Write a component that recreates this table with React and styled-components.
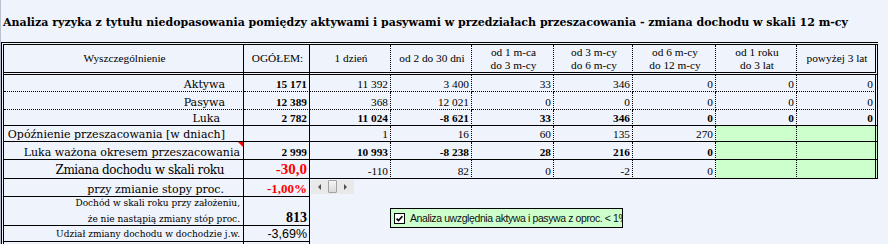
import React from 'react';
import styled, { createGlobalStyle } from 'styled-components';

const GlobalStyle = createGlobalStyle`
  html, body { margin: 0; padding: 0; background: #EFF3FB; }
  #root { min-height: 244px; }
`;

const Page = styled.div`
  min-height: 244px;
  border-left: 1px solid #B9C1D0;
  overflow: hidden;
  background: #EFF3FB;
`;

const Title = styled.h1`
  margin: 0;
  box-sizing: border-box;
  height: 42px;
  padding: 16px 0 0 2px;
  font: bold 11px/14px "DejaVu Serif", serif;
  color: #000;
  white-space: nowrap;
`;

const Sheet = styled.div`
  display: grid;
  grid-template-columns: 240px 66px 81px 81px 82px 79px 83px 81px 81px;
  grid-template-rows: 30px 17px 18px 16px 16px 18px 19px 18px 29px 16px 20px;
  width: max-content;
  border-top: 3px double #000;
  border-left: 3px double #000;
`;

const Cell = styled.div`
  box-sizing: border-box;
  position: relative;
  display: flex;
  align-items: ${p => p.$valign || 'flex-end'};
  justify-content: ${p => p.$justify || 'flex-end'};
  min-width: 0;
  padding: 0 ${p => (p.$pr ?? 2)}px 0 2px;
  border-right: ${p => p.$right || 'none'};
  border-bottom: ${p => p.$bottom || 'none'};
  background: ${p => (p.$green ? '#CCFFCC' : 'transparent')};
  overflow: hidden;
  white-space: nowrap;
`;

const HeadText = styled.span`
  font: 11.3px/13px "Liberation Serif", "Times New Roman", serif;
  color: #000;
  text-align: center;
`;

const Label = styled.span`
  font-family: "DejaVu Serif", serif;
  font-size: ${p => p.$size || 11}px;
  line-height: ${p => p.$lh || 13}px;
  letter-spacing: ${p => p.$ls || 0}px;
  color: #000;
`;

const SmallLines = styled.div`
  display: flex;
  flex-direction: column;
  align-items: flex-end;
  gap: 5px;
  font: 9px/11px "DejaVu Serif", serif;
  color: #000;
`;

const Num = styled.span`
  font-family: ${p => (p.$sans ? '"Liberation Sans", Arial, sans-serif' : '"Liberation Serif", "Times New Roman", serif')};
  font-size: ${p => p.$size || 11.3}px;
  line-height: ${p => p.$lh || 13}px;
  font-weight: ${p => (p.$bold ? 700 : 400)};
  color: ${p => (p.$red ? '#FF0000' : '#000')};
  padding-bottom: ${p => p.$pb || 0}px;
`;

const CommentMark = styled.span`
  position: absolute;
  top: 0;
  right: 0;
  width: 0;
  height: 0;
  border-top: 5px solid #FF0000;
  border-left: 5px solid transparent;
`;

const LowerArea = styled.div`
  grid-column: 3 / 10;
  grid-row: 8 / 12;
  display: flex;
  flex-direction: column;
  align-items: flex-start;
`;

const Scroll = styled.div`
  display: flex;
  height: 14px;
  margin: 1px 0 0 1px;
  background: #E9E9E9;
`;

const ScrollBtn = styled.div`
  width: 17px;
  display: flex;
  align-items: center;
  justify-content: center;
  &::before {
    content: '';
    width: 0;
    height: 0;
    border-top: 3px solid transparent;
    border-bottom: 3px solid transparent;
    ${p => (p.$dir === 'left' ? 'border-right: 3px solid #505050;' : 'border-left: 3px solid #505050;')}
  }
`;

const Thumb = styled.div`
  box-sizing: border-box;
  width: 9px;
  height: 13px;
  border: 1px solid #A3A3A3;
  border-radius: 1px;
  background: linear-gradient(#F7F7F7, #D9D9D9);
`;

const ControlBox = styled.label`
  box-sizing: border-box;
  display: flex;
  align-items: center;
  gap: 5px;
  width: 233px;
  height: 20px;
  margin: 14px 0 0 80px;
  padding-left: 3px;
  border: 1px solid #000;
  background: #CCFFCC;
  overflow: hidden;
  white-space: nowrap;
  font: 10.5px/12px "Liberation Sans", Arial, sans-serif;
  letter-spacing: -0.4px;
  color: #111;
`;

const CheckIcon = () => (
  <svg width="11" height="11" viewBox="0 0 11 11" style={{ flex: 'none' }}>
    <rect x="0.5" y="0.5" width="10" height="10" fill="#fff" stroke="#000" />
    <path d="M2.6 5.6 L4.5 7.6 L8.4 3.2" fill="none" stroke="#000" strokeWidth="1.7" />
  </svg>
);

const rightOf = i => (i <= 1 ? '1px solid #000' : i < 8 ? '1px dotted #000' : '3px double #000');

const headers = [
  ['Wyszczególnienie'],
  ['OGÓŁEM:'],
  ['1 dzień'],
  ['od 2 do 30 dni'],
  ['od 1 m-ca', 'do 3 m-cy'],
  ['od 3 m-cy', 'do 6 m-cy'],
  ['od 6 m-cy', 'do 12 m-cy'],
  ['od 1 roku', 'do 3 lat'],
  ['powyżej 3 lat'],
];

const rows = [
  { key: 'a', label: 'Aktywa', pr: 18, line: '1px dotted #000', firstBold: true, vals: ['15 171', '11 392', '3 400', '33', '346', '0', '0', '0'] },
  { key: 'p', label: 'Pasywa', pr: 18, line: '1px dotted #000', firstBold: true, vals: ['12 389', '368', '12 021', '0', '0', '0', '0', '0'] },
  { key: 'l', label: 'Luka', pr: 23, line: '1px solid #000', bold: true, vals: ['2 782', '11 024', '-8 621', '33', '346', '0', '0', '0'] },
  { key: 'o', label: 'Opóźnienie przeszacowania [w dniach]', pr: 18, line: '1px solid #000', vals: ['', '1', '16', '60', '135', '270', null, null] },
  { key: 'w', label: 'Luka ważona okresem przeszacowania', pr: 3, line: '1px solid #000', bold: true, mark: true, vals: ['2 999', '10 993', '-8 238', '28', '216', '0', null, null] },
  { key: 'z', label: 'Zmiana dochodu w skali roku', pr: 19, line: '1px solid #000', big: true, vals: ['-30,0', '-110', '82', '0', '-2', '0', null, null] },
];

export default function App() {
  return (
    <Page>
      <GlobalStyle />
      <Title>
        Analiza ryzyka z tytułu niedopasowania pomiędzy aktywami i pasywami w przedziałach przeszacowania - zmiana dochodu w skali 12 m-cy
      </Title>
      <Sheet>
        {headers.map((lines, i) => (
          <Cell key={'h' + i} $valign="center" $justify="center" $pr={0} $right={rightOf(i)} $bottom="3px double #000">
            <HeadText>
              {lines.map((t, j) => (
                <React.Fragment key={j}>
                  {j > 0 && <br />}
                  {t}
                </React.Fragment>
              ))}
            </HeadText>
          </Cell>
        ))}

        {rows.map(r => (
          <React.Fragment key={r.key}>
            <Cell $pr={r.pr} $right={rightOf(0)} $bottom={r.line}>
              {r.big ? (
                <Label $size={12} $lh={15} $ls={-0.4}>{r.label}</Label>
              ) : (
                <Label>{r.label}</Label>
              )}
              {r.mark && <CommentMark />}
            </Cell>
            {r.vals.map((v, j) => {
              const col = j + 1;
              if (v === null) {
                return <Cell key={j} $green $right={rightOf(col)} $bottom={r.line} />;
              }
              const isFirst = j === 0;
              if (r.big && isFirst) {
                return (
                  <Cell key={j} $right={rightOf(col)} $bottom={r.line}>
                    <Num $bold $red $size={15} $lh={16} $pb={1}>{v}</Num>
                  </Cell>
                );
              }
              return (
                <Cell key={j} $right={rightOf(col)} $bottom={r.line}>
                  <Num $bold={r.bold || (r.firstBold && isFirst)}>{v}</Num>
                </Cell>
              );
            })}
          </React.Fragment>
        ))}

        <LowerArea>
          <Scroll>
            <ScrollBtn $dir="left" />
            <Thumb />
            <ScrollBtn $dir="right" />
          </Scroll>
          <ControlBox>
            <CheckIcon />
            <span>Analiza uwzględnia aktywa i pasywa z oproc. &lt; 1%</span>
          </ControlBox>
        </LowerArea>

        <Cell $pr={19} $right={rightOf(0)} $bottom="1px solid #000">
          <Label>przy zmianie stopy proc.</Label>
        </Cell>
        <Cell $right={rightOf(1)} $bottom="1px solid #000">
          <Num $bold $red $size={13} $lh={14}>-1,00%</Num>
        </Cell>

        <Cell $pr={3} $right={rightOf(0)} $bottom="1px solid #000">
          <SmallLines>
            <span>Dochód w skali roku przy założeniu,</span>
            <span>że nie nastąpią zmiany stóp proc.</span>
          </SmallLines>
        </Cell>
        <Cell $right={rightOf(1)} $bottom="1px solid #000">
          <Num $bold $size={14} $lh={14}>813</Num>
        </Cell>

        <Cell $pr={3} $right={rightOf(0)} $bottom="1px solid #000">
          <Label $size={9}>Udział zmiany dochodu w dochodzie j.w.</Label>
        </Cell>
        <Cell $right={rightOf(1)} $bottom="1px solid #000">
          <Num $sans $size={12.5} $lh={14}>-3,69%</Num>
        </Cell>

        <Cell $right={rightOf(0)} />
        <Cell $right={rightOf(1)} />
      </Sheet>
    </Page>
  );
}
